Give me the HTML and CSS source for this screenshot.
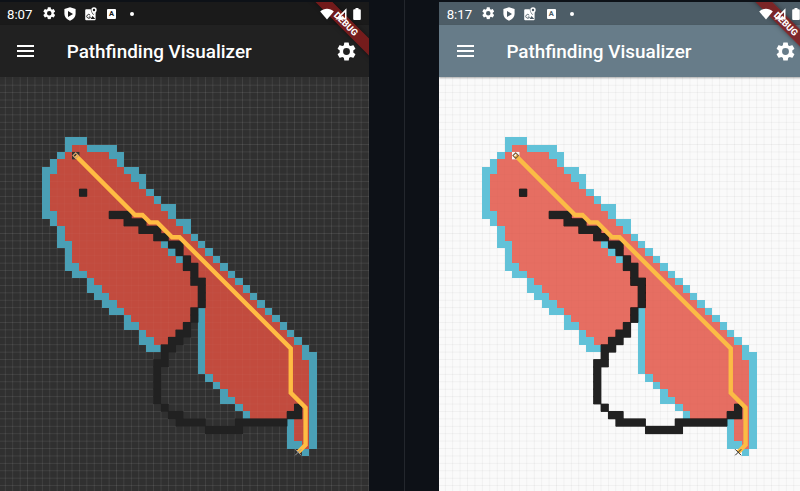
FILE: index.html
```html
<!DOCTYPE html>
<html lang="en">
<head>
<meta charset="utf-8">
<title>Pathfinding Visualizer</title>
<link rel="stylesheet" href="styles.css">
</head>
<body>
<svg class="defs" aria-hidden="true">
  <symbol id="gear" viewBox="2 2 20 20"><path d="M19.14 12.94c.04-.3.06-.61.06-.94s-.02-.64-.07-.94l2.03-1.58a.49.49 0 0 0 .12-.61l-1.92-3.32a.49.49 0 0 0-.59-.22l-2.39.96a7 7 0 0 0-1.62-.94l-.36-2.54a.48.48 0 0 0-.48-.41h-3.84a.47.47 0 0 0-.47.41l-.36 2.54a7.3 7.3 0 0 0-1.62.94l-2.39-.96a.47.47 0 0 0-.59.22L2.74 8.87a.47.47 0 0 0 .12.61l2.03 1.58a6.5 6.5 0 0 0 0 1.88l-2.03 1.58a.49.49 0 0 0-.12.61l1.92 3.32c.12.22.37.29.59.22l2.39-.96c.5.38 1.03.7 1.62.94l.36 2.54c.05.24.24.41.48.41h3.84c.24 0 .44-.17.47-.41l.36-2.54a7.3 7.3 0 0 0 1.62-.94l2.39.96c.22.08.47 0 .59-.22l1.92-3.32a.47.47 0 0 0-.12-.61zM12 15.6a3.6 3.6 0 1 1 0-7.2 3.6 3.6 0 0 1 0 7.2z"/></symbol>
  <symbol id="shield" viewBox="0 0 12 14"><path fill-rule="evenodd" d="M6 .3 11.6 2v5c0 3-2.300 5.300-5.600 6.700C2.700 12.300.4 10 .4 7V2zM4 4v6l5-3z"/></symbol>
  <symbol id="maps" viewBox="0 0 12 14"><path fill-rule="evenodd" d="M1.200 2.300h4.600c-.1 2 .9 3.600 2.600 5.700.9-1 1.700-1.900 2.200-2.700v7q0 1-1 1H1.200q-1 0-1-1v-9q0-1 1-1zM5.500 12h4.800L7.600 9z"/><path class="hole" d="M5.200 8.200A1.900 1.900 0 1 0 5.500 10H3.800"/><path fill-rule="evenodd" d="M9 .2a2.700 2.700 0 0 1 2.700 2.700C11.700 4.600 10.400 5.600 9 7.700 7.600 5.600 6.300 4.600 6.300 2.900A2.700 2.700 0 0 1 9 .2zM9 1.800a1.200 1.200 0 1 0 0 2.400 1.200 1.200 0 0 0 0-2.400z"/></symbol>
  <symbol id="wifi" viewBox="0 0 14 12"><path d="M.2 3.400C4.200-.1 9.800-.1 13.800 3.400L7 11.600z"/></symbol>
  <symbol id="signal" viewBox="0 0 12 12"><path fill-rule="evenodd" d="M11.500.3v11.200H.4zM10 4.200 6.400 7.800V10H10z"/></symbol>
  <symbol id="battery" viewBox="0 0 8 12"><path d="M2.500 0h3v1.300h1.300q1 0 1 1V11q0 1-1 1H1.200q-1 0-1-1V2.300q0-1 1-1h1.300z"/></symbol>
</svg>
<main class="stage">
  <section class="phone dark">
    <div class="status">
      <span class="time">8:07</span>
      <svg class="s-gear"><use href="#gear"/></svg>
      <svg class="s-shield"><use href="#shield"/></svg>
      <svg class="s-maps"><use href="#maps"/></svg>
      <span class="s-a">A</span>
      <span class="s-dot"></span>
      <svg class="s-wifi"><use href="#wifi"/></svg>
      <svg class="s-signal"><use href="#signal"/></svg>
      <svg class="s-battery"><use href="#battery"/></svg>
    </div>
    <header class="appbar">
      <span class="menu"><i></i><i></i><i></i></span>
      <h1>Pathfinding Visualizer</h1>
      <svg class="settings"><use href="#gear"/></svg>
    </header>
    <svg class="board" viewBox="-1 77 370 414"></svg>
    <div class="banner">DEBUG</div>
  </section>
  <div class="divider"></div>
  <section class="phone light">
    <div class="status">
      <span class="time">8:17</span>
      <svg class="s-gear"><use href="#gear"/></svg>
      <svg class="s-shield"><use href="#shield"/></svg>
      <svg class="s-maps"><use href="#maps"/></svg>
      <span class="s-a">A</span>
      <span class="s-dot"></span>
      <svg class="s-wifi"><use href="#wifi"/></svg>
      <svg class="s-signal"><use href="#signal"/></svg>
      <svg class="s-battery"><use href="#battery"/></svg>
    </div>
    <header class="appbar">
      <span class="menu"><i></i><i></i><i></i></span>
      <h1>Pathfinding Visualizer</h1>
      <svg class="settings"><use href="#gear"/></svg>
    </header>
    <svg class="board" viewBox="-1 77 370 414"></svg>
    <div class="banner">DEBUG</div>
  </section>
</main>
<script src="board.js"></script>
</body>
</html>
```
FILE: styles.css
```css
body {
  margin: 0;
  background: #0d1117;
  overflow: hidden;
  font-family: Roboto, sans-serif;
}
.defs { position: absolute; width: 0; height: 0; }
.stage {
  display: flex;
  width: 800px;
  height: 491px;
  padding-top: 2px;
  box-sizing: border-box;
  overflow: hidden;
}
.phone {
  position: relative;
  flex: none;
  width: 370px;
  height: 489px;
  overflow: hidden;
  color: #fff;
}
.phone.dark {
  margin-left: -1px;
  --status: #1a1a1a;
  --bar: #212121;
  --canvas: #303030;
  --line: rgba(255, 255, 255, .065);
  --visited: #c24b3e;
  --frontier: #4a9fb5;
  --path: #ffbc43;
  --wall-edge: #212121;
  --mark: #d0a070;
  --origin: #303030;
  --end: #999;
}
.phone.light {
  --status: #4d5d67;
  --bar: #677c89;
  --canvas: #fafafa;
  --line: rgba(0, 0, 0, .032);
  --visited: #e66e62;
  --frontier: #62c2d8;
  --path: #fbbc45;
  --wall-edge: #0c0c0c;
  --mark: #806040;
  --origin: #fafafa;
  --end: #333;
}
.divider {
  flex: none;
  width: 1px;
  margin: -2px 34.200px 0 34.500px;
  background: #23272d;
}
.status {
  display: flex;
  align-items: center;
  height: 23px;
  padding-left: 8px;
  background: var(--status);
}
.status svg, .settings { flex: none; fill: #fff; }
.time { width: 35.500px; font-size: 13.200px; line-height: 23px; padding-top: 1px; }
.s-gear { width: 12.500px; height: 12.500px; }
.s-shield { width: 12px; height: 14px; margin-left: 8.500px; }
.s-maps { width: 12px; height: 14px; margin-left: 9px; }
.hole { fill: none; stroke: var(--status); stroke-width: .9; }
.s-a {
  width: 9px;
  height: 10px;
  margin-left: 10.500px;
  border-radius: 1px;
  background: #fff;
  color: var(--status);
  font-size: 7.500px;
  font-weight: 700;
  line-height: 10px;
  text-align: center;
}
.s-dot { width: 4px; height: 4px; margin-left: 14px; border-radius: 50%; background: #fff; }
.s-wifi { width: 14px; height: 12px; margin-left: 185.500px; }
.s-signal { width: 12px; height: 12px; margin-left: 1px; }
.s-battery { width: 8px; height: 12px; margin-left: 6px; }
.s-wifi, .s-signal, .s-battery { position: relative; z-index: 2; }
.appbar {
  display: flex;
  align-items: center;
  height: 52px;
  padding-left: 18px;
  background: var(--bar);
  position: relative;
  box-shadow: 0 1px 2px rgba(0, 0, 0, .3);
}
.menu { display: flex; flex-direction: column; gap: 2.900px; width: 17.200px; }
.menu i { height: 2px; background: #fff; }
h1 {
  width: 270px;
  margin: 0 0 0 32.500px;
  padding-top: 2px;
  font-size: 18.900px;
  font-weight: 500;
  line-height: 50px;
  white-space: nowrap;
}
.settings { width: 19px; height: 19px; }
.board { display: block; width: 370px; height: 414px; background: var(--canvas); }
.grid { fill: none; stroke: var(--line); stroke-width: 1; }
.over { opacity: .4; }
.visited { fill: var(--visited); }
.frontier { fill: var(--frontier); }
.wall-edge { fill: var(--wall-edge); stroke: var(--wall-edge); stroke-width: .7; }
.wall { fill: #212121; }
.origin { fill: var(--origin); }
.route { fill: none; stroke: var(--path); stroke-width: 4.400; }
.mark { fill: none; stroke: var(--mark); stroke-width: 1.200; }
.end { fill: none; stroke: var(--end); stroke-width: 1; }
.banner {
  position: absolute;
  z-index: 1;
  top: 16px;
  right: -32px;
  width: 110px;
  height: 11.500px;
  background: rgba(132, 27, 27, .85);
  box-shadow: 0 0 5px rgba(0, 0, 0, .45);
  font-size: 9.200px;
  font-weight: 800;
  line-height: 11.500px;
  text-align: center;
  transform: rotate(45deg);
}
```
FILE: board.js
```js
// Each row lists its runs as "kind first-last": v visited, f frontier, w wall.
const rows = [
  "f3-5", "f3 v4-5 f6-9", "f2 v3-8 f9-10", "f1 v2-9 f10", "f0-1 v2-10 f11-12",
  "f0 v1-11 f12-13", "f0 v1-12 f13", "f0 v1-4 w5 v6-13 f14", "f0 v1-14 f15", "f0 v1-15 f16-17",
  "f0-1 v2-8 w9-11 v12-16 f17", "f1 v2-10 w11-13 v14-17 f18-19", "f2 v3-12 w13-15 v16-18 f19",
  "f2 v3-14 w15-16 v17-19 f20", "f2-3 v4-15 f16 w17-18 v19-20 f21", "f3 v4-16 f17 w18 v19-21 f22",
  "f3 v4-17 f18 w19 v20-22 f23", "f3-4 v5-18 w19-20 v21-23 f24", "f4-5 v6-19 w20 v21-24 f25",
  "f6 v7-19 w20-21 v22-25 f26", "f6-7 v8-20 w21 v22-26 f27", "f7-8 v9-20 w21 v22-27 f28",
  "f8-9 v10-20 w21 v22-28 f29", "f9-10 v11-19 w20 f21 v22-29 f30", "f11 v12-19 w20 f21 v22-30 f31",
  "f11-12 v13-18 w19 f21 v22-31 f32", "f13 v14-17 w18-19 f21 v22-32 f33",
  "f13-14 v15-16 w17-18 f21 v22-33 f34", "f14-15 w16-17 f21 v22-34 f35",
  "w16 f21 v22-34 f35-36", "w15-16 f21 v22-35 f36", "w15 f21 v22-35 f36", "w15 f22 v23-35 f36",
  "w15 f23 v24-35 f36", "w15 f24 v25-35 f36", "w15 f24-25 v26-35 f36", "w16 f26 v27-33 w34 v35 f36",
  "w17-18 f27 v28-32 w33-34 v35 f36", "w18-21 w26-32 f33 v34-35 f36", "w22-26 f33 v34-35 f36",
  "f33 v34-35 f36", "f33-34 v35 f36", "f35"
];
const route = [[4,2],[12,10],[13,10],[14,11],[15,11],[17,13],[18,13],[33,28],[33,34],[35,36],[35,41],[34,42]];
const size = 7.415, left = 42.35, top0 = 137.1;
const x = c => +(left + c * size).toFixed(2);
const y = r => +(top0 + r * size).toFixed(2);

const areas = { v: "", f: "", w: "" };
rows.forEach((row, r) => row.split(" ").forEach(run => {
  const [first, last = first] = run.slice(1).split("-").map(Number);
  areas[run[0]] += `M${x(first)} ${y(r)}H${x(last + 1)}V${y(r + 1)}H${x(first)}z`;
}));
let grid = "";
for (let c = -6; c < 46; c++) grid += `M${x(c)} 77V491`;
for (let r = -9; r < 49; r++) grid += `M-1 ${y(r)}H370`;
const points = route.map(([c, r]) => `${x(c + .5)},${y(r + .5)}`).join(" ");

const drawing = `
  <path class="grid" d="${grid}"/>
  <path class="visited" shape-rendering="crispEdges" d="${areas.v}"/>
  <path class="grid over" d="${grid}"/>
  <path class="frontier" shape-rendering="crispEdges" d="${areas.f}"/>
  <path class="wall-edge" d="${areas.w}"/>
  <path class="wall" shape-rendering="crispEdges" d="${areas.w}"/>
  <rect class="origin" x="${x(4)}" y="${y(2)}" width="${size}" height="${size}"/>
  <polyline class="route" points="${points}"/>
  <path class="mark" d="M75.700 152.900l2.700 2.700-2.700 2.700-2.700-2.700z"/>
  <path class="end" d="M295.200 449.300l6 6m0-6l-6 6"/>`;
document.querySelectorAll(".board").forEach(board => { board.innerHTML = drawing; });
```
